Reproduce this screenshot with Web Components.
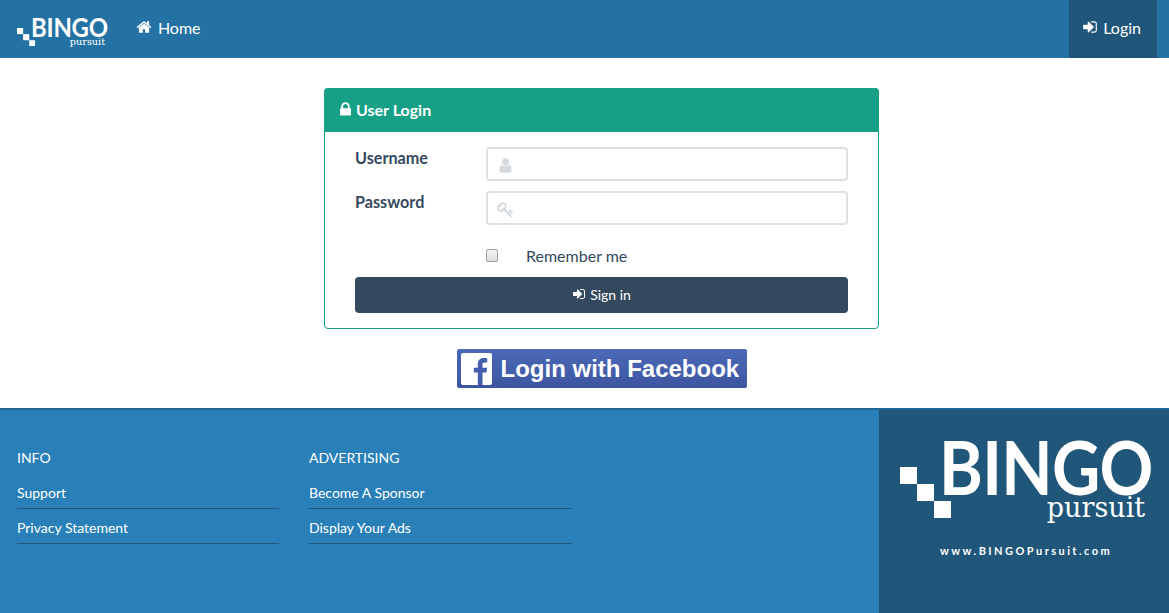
<!DOCTYPE html>
<html lang="en">
<head>
<meta charset="utf-8">
<title>BINGO Pursuit - Login</title>
<style>
    html, body { margin: 0; padding: 0; background: #fff; }
    body { font-family: Lato, "Liberation Sans", sans-serif; color: #34495e; overflow: hidden; }
</style>
</head>
<body>
<bp-navbar></bp-navbar>
<bp-main>
    <bp-login-card></bp-login-card>
    <bp-fb-button></bp-fb-button>
</bp-main>
<bp-footer>
    <bp-footer-col heading="INFO" links="Support|Privacy Statement"></bp-footer-col>
    <bp-footer-col heading="ADVERTISING" links="Become A Sponsor|Display Your Ads"></bp-footer-col>
</bp-footer>

<script>
const ICONS = {
    home: "M1472 992v480q0 26-19 45t-45 19h-384v-384h-256v384h-384q-26 0-45-19t-19-45v-480q0-1 .5-3t.5-3l575-474 575 474q1 2 1 6zm223-69l-62 74q-8 9-21 11h-3q-13 0-21-7l-692-577-692 577q-12 8-24 7-13-2-21-11l-62-74q-8-10-7-23.5t11-21.5l719-599q32-26 76-26t76 26l244 204v-195q0-14 9-23t23-9h192q14 0 23 9t9 23v408l219 182q10 8 11 21.5t-7 23.5z",
    signin: "M1312 896q0 26-19 45l-544 544q-19 19-45 19t-45-19-19-45v-288h-448q-26 0-45-19t-19-45v-384q0-26 19-45t45-19h448v-288q0-26 19-45t45-19 45 19l544 544q19 19 19 45zm352-352v704q0 119-84.5 203.5t-203.5 84.5h-320q-13 0-22.5-9.5t-9.5-22.5q0-4-1-20t-.5-26.5 3-23.5 10-19.5 20.5-6.5h320q66 0 113-47t47-113v-704q0-66-47-113t-113-47h-312l-11.5-1-11.5-3-8-5.5-7-9-2-13.5q0-4-1-20t-.5-26.5 3-23.5 10-19.5 20.5-6.5h320q119 0 203.5 84.5t84.5 203.5z",
    lock: "M640 768h512v-192q0-106-75-181t-181-75-181 75-75 181v192zm832 96v576q0 40-28 68t-68 28h-960q-40 0-68-28t-28-68v-576q0-40 28-68t68-28h32v-192q0-184 132-316t316-132 316 132 132 316v192h32q40 0 68 28t28 68z",
    user: "M1536 1399q0 109-62.5 187t-150.5 78h-854q-88 0-150.5-78t-62.5-187q0-85 8.5-160.5t31.5-152 58.5-131 94-89 134.5-34.5q131 128 313 128t313-128q76 0 134.5 34.5t94 89 58.5 131 31.5 152 8.5 160.5zm-256-887q0 159-112.5 271.5t-271.5 112.5-271.5-112.5-112.5-271.5 112.5-271.5 271.5-112.5 271.5 112.5 112.5 271.5z",
    key: "M832 512q0-80-56-136t-136-56-136 56-56 136q0 42 19 83-41-19-83-19-80 0-136 56t-56 136 56 136 136 56 136-56 56-136q0-42-19-83 41 19 83 19 80 0 136-56t56-136zm851 704q0 17-49 66t-66 49q-9 0-28.5-16t-36.5-33-38.5-40-24.5-26l-96 96 220 220q28 28 28 68 0 42-39 81t-81 39q-40 0-68-28l-671-671q-176 131-365 131-163 0-265.5-102.5t-102.5-265.5q0-160 95-313t248-248 313-95q163 0 265.5 102.5t102.5 265.5q0 189-131 365l355 355 96-96q-3-3-26-24.5t-40-38.5-33-36.5-16-28.5q0-17 49-66t66-49q13 0 23 10 6 6 46 44.5t82 79.5 86.5 86 73 78 28.5 41z"
};

function icon(name, size) {
    return `<svg width="${size}" height="${size}" viewBox="0 0 1792 1792" fill="currentColor"><path d="${ICONS[name]}"/></svg>`;
}

// logo scales with font-size of the host, 1em = 74px on the big one
class BpLogo extends HTMLElement {
    constructor() {
        super();
        this.attachShadow({ mode: "open" }).innerHTML = `
            <style>
                :host { display: inline-flex; color: #fff; }
                svg { width: .69em; height: .69em; margin-top: .365em; flex: none; fill: currentColor; }
                .text { width: 2.85em; margin-left: -.16em; display: flex; flex-direction: column; align-items: flex-end; }
                .bingo {
                    align-self: flex-start;
                    font-weight: 700;
                    line-height: .72em;
                    letter-spacing: -.01em;
                    white-space: nowrap;
                    transform: scaleX(.9);
                    transform-origin: 0 0;
                }
                .pursuit {
                    font-family: "DejaVu Serif", serif;
                    font-size: .365em;
                    line-height: 1em;
                    margin-top: .03em;
                    margin-right: .185em;
                }
            </style>
            <svg viewBox="0 0 3 3"><rect x="0" y="0" width="1" height="1"/><rect x="1" y="1" width="1" height="1"/><rect x="2" y="2" width="1" height="1"/></svg>
            <div class="text"><span class="bingo">BINGO</span><span class="pursuit">pursuit</span></div>
        `;
    }
}

class BpNavbar extends HTMLElement {
    constructor() {
        super();
        this.attachShadow({ mode: "open" }).innerHTML = `
            <style>
                :host { display: flex; height: 58px; background: #2472a4; color: #fff; padding: 0 12px 0 17px; font-size: 16px; }
                bp-logo { font-size: 26.6px; align-self: flex-start; margin-top: 18px; }
                .link { display: flex; align-items: center; padding-bottom: 4px; box-sizing: border-box; }
                .home { margin-left: 29px; gap: 6px; }
                .login { margin-left: auto; background: #1f5679; padding: 0 16px 4px 13px; gap: 5px; }
                .link svg { display: block; }
            </style>
            <bp-logo></bp-logo>
            <div class="link home">${icon("home", 16)}Home</div>
            <div class="link login">${icon("signin", 16)}Login</div>
        `;
    }
}

class BpMain extends HTMLElement {
    constructor() {
        super();
        this.attachShadow({ mode: "open" }).innerHTML = `
            <style>
                :host { display: flex; flex-direction: column; align-items: center; height: 350px; box-sizing: border-box; width: 555px; margin-left: 324px; padding-top: 30px; gap: 20px; }
            </style>
            <slot></slot>
        `;
    }
}

class BpField extends HTMLElement {
    constructor() {
        super();
        this.attachShadow({ mode: "open" }).innerHTML = `
            <style>
                :host { display: flex; height: 34px; }
                label { width: 131px; font-weight: 700; font-size: 16.2px; line-height: 22px; }
                .input { flex: 1; box-sizing: border-box; border: 2px solid #dce0e3; border-radius: 4px; display: flex; align-items: center; padding-left: 9px; color: #d5dade; }
                .input svg { margin-top: 2px; }
            </style>
            <label>${this.getAttribute("label")}</label>
            <div class="input">${icon(this.getAttribute("icon"), 17)}</div>
        `;
    }
}

class BpLoginCard extends HTMLElement {
    constructor() {
        super();
        this.attachShadow({ mode: "open" }).innerHTML = `
            <style>
                :host { display: block; width: 555px; height: 241px; box-sizing: border-box; border: 1px solid #16a085; border-radius: 4px; }
                .head { margin: -1px -1px 0; height: 44px; background: #16a085; color: #fff; border-radius: 4px 4px 0 0; display: flex; align-items: center; padding: 0 0 2px 13px; box-sizing: border-box; gap: 2px; font-weight: 700; font-size: 16px; }
                .body { padding: 15px 30px 0; display: flex; flex-direction: column; gap: 10px; }
                .remember { display: flex; align-items: center; height: 18px; margin: 11px 0 3px 131px; font-size: 16px; }
                .box { box-sizing: border-box; width: 12px; height: 13px; border: 1px solid #a0a0a0; border-radius: 2px; background: linear-gradient(#f4f4f4, #dedede); margin-right: 28px; }
                .btn { height: 36px; box-sizing: border-box; padding-bottom: 2px; background: #34495e; color: #fff; border-radius: 4px; display: flex; align-items: center; justify-content: center; gap: 4px; font-size: 14px; font-weight: 400; }
            </style>
            <div class="head">${icon("lock", 17)}User Login</div>
            <div class="body">
                <bp-field label="Username" icon="user"></bp-field>
                <bp-field label="Password" icon="key"></bp-field>
                <div class="remember"><span class="box"></span>Remember me</div>
                <div class="btn">${icon("signin", 14)}Sign in</div>
            </div>
        `;
    }
}

class BpFbButton extends HTMLElement {
    constructor() {
        super();
        this.attachShadow({ mode: "open" }).innerHTML = `
            <style>
                :host { display: flex; align-items: center; width: 290px; height: 39px; box-sizing: border-box; border-radius: 2px; background: linear-gradient(#4c6ab8, #3c55a0); color: #fff; padding-left: 4px; gap: 9px; font-family: "Liberation Sans", Arial, sans-serif; font-weight: 700; font-size: 24px; white-space: nowrap; }
                svg { width: 31px; height: 32px; flex: none; }
            </style>
            <svg viewBox="0 0 31 32"><rect width="31" height="32" rx="2" fill="#fff"/><path fill="#435fab" d="M21.500 32V19.500h4l.6-4.700h-4.600v-3c0-1.400.4-2.300 2.300-2.300h2.400V5.300c-.4-.1-1.900-.2-3.500-.2-3.500 0-5.900 2.100-5.900 6.100v3.600h-4v4.700h4V32z"/></svg>
            <span>Login with Facebook</span>
        `;
    }
}

class BpFooterCol extends HTMLElement {
    constructor() {
        super();
        const links = this.getAttribute("links").split("|");
        this.attachShadow({ mode: "open" }).innerHTML = `
            <style>
                :host { display: block; color: #fff; font-size: 14px; }
                h4 { margin: 0 0 6px; font-weight: 400; font-size: 14px; line-height: 20px; }
                div { height: 35px; box-sizing: border-box; border-bottom: 1px solid #1f5679; line-height: 37px; }
            </style>
            <h4>${this.getAttribute("heading")}</h4>
            ${links.map(l => `<div>${l}</div>`).join("")}
        `;
    }
}

class BpFooter extends HTMLElement {
    constructor() {
        super();
        this.attachShadow({ mode: "open" }).innerHTML = `
            <style>
                :host { display: flex; height: 205px; box-sizing: border-box; border-top: 2px solid #216694; background: #2980b9; color: #fff; }
                .cols { flex: 1; display: grid; grid-template-columns: 262px 263px; justify-content: start; align-content: start; gap: 30px; padding: 38px 0 0 17px; }
                .panel { width: 290px; background: #1f5679; display: flex; flex-direction: column; align-items: flex-start; padding: 30px 0 0 21px; box-sizing: border-box; }
                bp-logo { font-size: 74px; }
                .url { font-size: 11px; font-weight: 700; letter-spacing: 2.45px; margin: 23px 0 0 40px; white-space: nowrap; }
            </style>
            <div class="cols"><slot></slot></div>
            <div class="panel">
                <bp-logo></bp-logo>
                <div class="url">www.BINGOPursuit.com</div>
            </div>
        `;
    }
}

customElements.define("bp-logo", BpLogo);
customElements.define("bp-navbar", BpNavbar);
customElements.define("bp-main", BpMain);
customElements.define("bp-field", BpField);
customElements.define("bp-login-card", BpLoginCard);
customElements.define("bp-fb-button", BpFbButton);
customElements.define("bp-footer-col", BpFooterCol);
customElements.define("bp-footer", BpFooter);
</script>
</body>
</html>
